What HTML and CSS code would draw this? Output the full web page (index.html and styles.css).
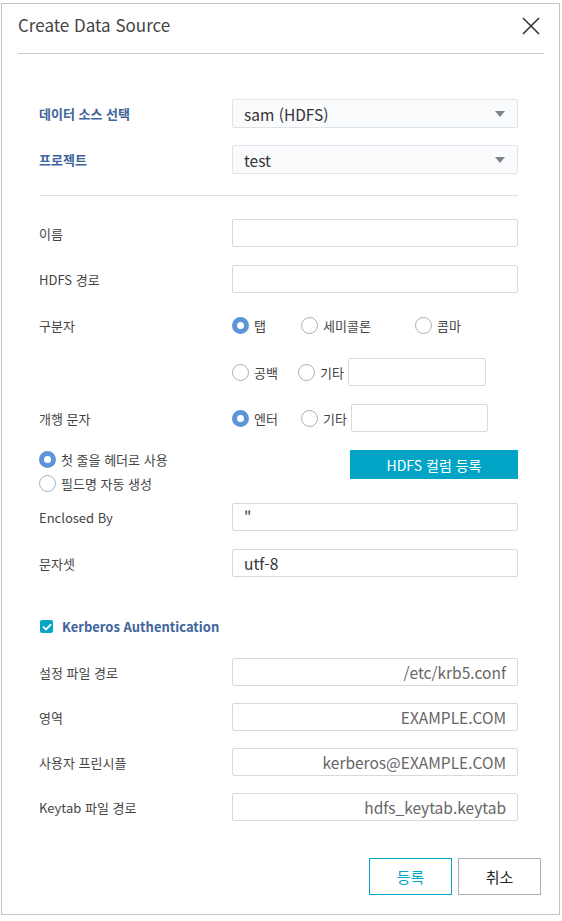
FILE: index.html
```html
<!DOCTYPE html>
<html lang="ko">
<head>
<meta charset="utf-8">
<link rel="stylesheet" href="styles.css">
</head>
<body>
<div class="dialog">
  <div class="header">
    <div class="title">Create Data Source</div>
    <svg class="close" width="20" height="20" viewBox="0 0 20 20"><path d="M2 2L18 18M18 2L2 18" stroke="#333" stroke-width="1.6" fill="none"/></svg>
  </div>
  <div class="content">
    <div class="row sel-row">
      <div class="label strong">데이터 소스 선택</div>
      <div class="select"><span>sam (HDFS)</span><i class="caret"></i></div>
    </div>
    <div class="row sel-row">
      <div class="label strong">프로젝트</div>
      <div class="select"><span>test</span><i class="caret"></i></div>
    </div>
    <div class="sep"></div>
    <div class="row">
      <div class="label">이름</div>
      <div class="input"></div>
    </div>
    <div class="row">
      <div class="label">HDFS 경로</div>
      <div class="input"></div>
    </div>
    <div class="row radio-row r1">
      <div class="label">구분자</div>
      <div class="radios">
        <label class="radio w-tab"><i class="dot on"></i>탭</label>
        <label class="radio w-semi"><i class="dot"></i>세미콜론</label>
        <label class="radio"><i class="dot"></i>콤마</label>
      </div>
    </div>
    <div class="row radio-row r2">
      <div class="label"></div>
      <div class="radios">
        <label class="radio w-space"><i class="dot"></i>공백</label>
        <label class="radio"><i class="dot"></i>기타</label>
        <div class="small-input s1"></div>
      </div>
    </div>
    <div class="row radio-row r3">
      <div class="label">개행 문자</div>
      <div class="radios">
        <label class="radio w-enter"><i class="dot on"></i>엔터</label>
        <label class="radio"><i class="dot"></i>기타</label>
        <div class="small-input s2"></div>
      </div>
    </div>
    <div class="header-row">
      <div class="left-radios">
        <label class="radio"><i class="dot on"></i>첫 줄을 헤더로 사용</label>
        <label class="radio"><i class="dot"></i>필드명 자동 생성</label>
      </div>
      <div class="btn-hdfs">HDFS 컬럼 등록</div>
    </div>
    <div class="row enc">
      <div class="label">Enclosed By</div>
      <div class="input"><span>"</span></div>
    </div>
    <div class="row">
      <div class="label">문자셋</div>
      <div class="input"><span>utf-8</span></div>
    </div>
    <div class="kerb">
      <i class="check"><svg width="12" height="12" viewBox="0 0 12 12"><path d="M2.5 6.2L5 8.5L9.5 3.8" stroke="#fff" stroke-width="1.8" fill="none" stroke-linecap="round" stroke-linejoin="round"/></svg></i>
      <span>Kerberos Authentication</span>
    </div>
    <div class="row krow">
      <div class="label">설정 파일 경로</div>
      <div class="input right"><span>/etc/krb5.conf</span></div>
    </div>
    <div class="row krow">
      <div class="label">영역</div>
      <div class="input right"><span>EXAMPLE.COM</span></div>
    </div>
    <div class="row krow">
      <div class="label">사용자 프린시플</div>
      <div class="input right"><span>kerberos@EXAMPLE.COM</span></div>
    </div>
    <div class="row krow">
      <div class="label">Keytab 파일 경로</div>
      <div class="input right"><span>hdfs_keytab.keytab</span></div>
    </div>
  </div>
  <div class="footer">
    <div class="btn primary">등록</div>
    <div class="btn">취소</div>
  </div>
</div>
</body>
</html>
```
FILE: styles.css
```css
* { box-sizing: border-box; }
body {
  margin: 0;
  background: #fff;
  font-family: "Noto Sans CJK KR", "Noto Sans", sans-serif;
  color: #444;
}
.dialog {
  margin: 3px 0 0 1px;
  width: 559px;
  height: 912px;
  border: 1px solid #c4c4c4;
  background: #fff;
  display: flex;
  flex-direction: column;
}
.header {
  margin: 0 15px 0 16px;
  height: 50px;
  border-bottom: 1px solid #c8c8c8;
  display: flex;
  align-items: center;
  justify-content: space-between;
}
.title {
  font-size: 17px;
  color: #444;
  margin-top: -8px;
}
.close { margin-right: 3px; margin-top: -6px; }
.content {
  padding: 45px 40px 0 37px;
  flex: 1;
}
.row {
  display: grid;
  grid-template-columns: 193px 286px;
  align-items: center;
  height: 28px;
  margin-bottom: 18px;
}
.label { font-size: 13px; color: #444; }
.label.strong { font-weight: bold; color: #3e649b; }
.select {
  height: 29px;
  border: 1px solid #e0e4e8;
  border-radius: 2px;
  background: #fafbfc;
  display: flex;
  align-items: center;
  justify-content: space-between;
  padding: 0 12px 0 11px;
  font-size: 15.5px;
  color: #333;
}
.caret {
  width: 0; height: 0;
  border-left: 5px solid transparent;
  border-right: 5px solid transparent;
  border-top: 6px solid #7d8389;
}
.sel-row:nth-child(2) { margin-bottom: 22px; }
.sep {
  height: 1px;
  background: #dfe2e6;
  margin: 0 0 23px 0;
  width: 479px;
}
.input {
  height: 28px;
  border: 1px solid #d5dadf;
  border-radius: 2px;
  background: #fff;
  display: flex;
  align-items: center;
  padding: 0 11px;
  font-size: 15.5px;
  color: #333;
}
.input.right { justify-content: flex-end; color: #666; padding-right: 11px; }
.radio-row { height: 28px; }
.r1 { margin-bottom: 15px; }
.r2 { height: 36px; margin-bottom: 14px; }
.r3 { margin-bottom: 19px; }
.radios { display: flex; align-items: center; }
.radio {
  display: flex;
  align-items: center;
  font-size: 13px;
  color: #444;
}
.dot {
  width: 17px; height: 17px;
  border-radius: 50%;
  border: 1px solid #a9b0b7;
  background: #fff;
  margin-right: 5px;
  display: inline-block;
}
.dot.on { border: 5px solid #5d95d8; }
.w-tab { width: 69px; }
.w-semi { width: 114px; }
.w-space { width: 66px; }
.w-enter { width: 69px; }
.small-input {
  height: 28px;
  border: 1px solid #d5dadf;
  border-radius: 2px;
  margin-left: 4px;
}
.s1 { width: 138px; }
.s2 { width: 137px; }
.header-row {
  display: flex;
  justify-content: space-between;
  margin-bottom: 11px;
}
.left-radios { display: flex; flex-direction: column; gap: 7px; }
.left-radios .radio { height: 17px; }
.btn-hdfs {
  width: 168px;
  height: 29px;
  background: #00a5c5;
  color: #fff;
  font-size: 14px;
  display: flex;
  align-items: center;
  justify-content: center;
  margin-top: -1px;
  margin-right: 1px;
}
.enc { margin-bottom: 18px; }
.kerb {
  display: flex;
  align-items: center;
  margin: 40px 0 22px 1px;
  font-size: 13px;
  font-weight: bold;
  color: #3e649b;
}
.check {
  width: 13px; height: 13px;
  border-radius: 2px;
  background: #0aa4c6;
  display: flex;
  align-items: center;
  justify-content: center;
  margin-right: 9px;
}
.krow { margin-bottom: 17px; }
.footer {
  display: flex;
  justify-content: flex-end;
  gap: 6px;
  padding: 0 18px 19px 0;
}
.btn {
  width: 83px;
  height: 37px;
  border: 1px solid #a9aeb8;
  display: flex;
  align-items: center;
  justify-content: center;
  font-size: 15px;
  color: #222;
}
.btn.primary { border-color: #00a5c5; color: #00a5c5; }
```
